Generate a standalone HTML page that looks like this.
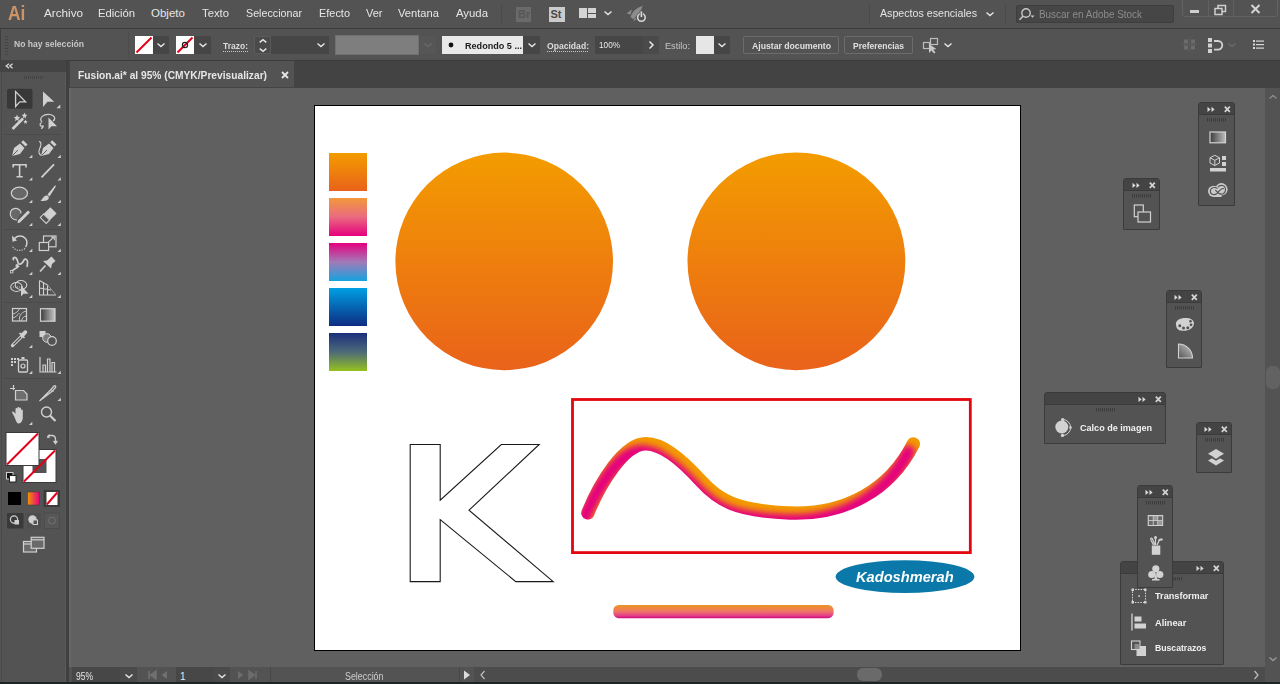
<!DOCTYPE html>
<html><head><meta charset="utf-8"><style>
html,body{margin:0;padding:0;}
body{width:1280px;height:684px;overflow:hidden;position:relative;background:#535353;font-family:"Liberation Sans",sans-serif;}
.a{position:absolute;box-sizing:border-box;}
.t{position:absolute;white-space:pre;line-height:normal;transform-origin:0 0;}
svg{position:absolute;overflow:visible;}

.pnl{position:absolute;box-sizing:border-box;background:#535353;border:1px solid #3d3d3d;border-radius:3px 3px 2px 2px;}
.ph{position:absolute;left:0;right:0;top:0;height:12px;background:#444444;border-radius:2px 2px 0 0;}

</style></head><body>
<div class="a" style="left:0px;top:0px;width:1280px;height:28px;background:#535353"></div>
<div class="a" style="left:0px;top:28px;width:1280px;height:1px;background:#3a3a3a"></div>
<span class="t" style="left:8px;top:1.9px;font-size:20px;font-weight:bold;color:#cf9466;transform:scaleX(0.87)">Ai</span>
<div class="a" style="left:501px;top:5px;width:1px;height:18px;background:#4a4a4a"></div>
<div class="a" style="left:869px;top:4px;width:1px;height:20px;background:#4b4b4b"></div>
<div class="a" style="left:1005px;top:4px;width:1px;height:20px;background:#4b4b4b"></div>
<div class="a" style="left:516px;top:7px;width:15px;height:15px;background:#6a6a6a"></div>
<span class="t" style="left:518px;top:7.5px;font-size:11px;font-weight:bold;color:#575757">Br</span>
<div class="a" style="left:549px;top:7px;width:16px;height:15px;background:#cbcbcb"></div>
<span class="t" style="left:550.5px;top:7.5px;font-size:11px;font-weight:bold;color:#4a4a4a">St</span>
<div class="a" style="left:579px;top:8px;width:8px;height:10px;background:#d4d4d4"></div>
<div class="a" style="left:588px;top:8px;width:8px;height:4.5px;background:#d4d4d4"></div>
<div class="a" style="left:588px;top:13.5px;width:8px;height:4.5px;background:#d4d4d4"></div>
<svg style="left:601.5px;top:7px;" width="12" height="12" viewBox="0 0 12 12"><path d="M2.5 4.45 L6 7.55 L9.5 4.45" fill="none" stroke="#e6e6e6" stroke-width="1.4"/></svg>
<svg style="left:620px;top:2px;" width="32" height="24" viewBox="0 0 32 24"><path d="M10.5 15 C12 10 16 6 22.7 3.8 C21 9.5 18 13.5 13 17 Z" fill="#8c8c8c"/><path d="M6.5 11.5 L12 7.5 L10.5 12.5 Z" fill="#8c8c8c"/><path d="M13.5 19.5 L14.5 15.5 L16.5 17 Z" fill="#8c8c8c"/><circle cx="21.4" cy="15.4" r="5.2" fill="#535353"/><circle cx="21.4" cy="15.4" r="3.8" fill="none" stroke="#d8d8d8" stroke-width="1.6"/><path d="M21.4 8.8 V15" stroke="#535353" stroke-width="3.4"/><path d="M21.4 9.3 V15" stroke="#d8d8d8" stroke-width="1.7"/></svg>
<svg style="left:983.5px;top:8px;" width="12" height="12" viewBox="0 0 12 12"><path d="M2.5 4.45 L6 7.55 L9.5 4.45" fill="none" stroke="#e6e6e6" stroke-width="1.4"/></svg>
<div class="a" style="left:1016px;top:5px;width:158px;height:18px;background:#464646;border:1px solid #3e3e3e;border-radius:2px"></div>
<svg style="left:1017px;top:6px;" width="20" height="16" viewBox="0 0 20 16"><circle cx="9" cy="7" r="4.2" fill="none" stroke="#c8c8c8" stroke-width="1.4"/><path d="M6.2 10 L2.5 13.8" stroke="#c8c8c8" stroke-width="1.6"/><path d="M13.5 9.5 L17.5 9.5 L15.5 11.8 Z" fill="#c8c8c8"/></svg>
<div class="a" style="left:1182px;top:-3px;width:96px;height:20px;border:1px solid #636363;border-radius:3px"></div>
<div class="a" style="left:1208px;top:0px;width:1px;height:16px;background:#606060"></div>
<div class="a" style="left:1233px;top:0px;width:1px;height:16px;background:#606060"></div>
<div class="a" style="left:1190px;top:10px;width:9px;height:3px;background:#cfcfcf"></div>
<svg style="left:1214px;top:4px;" width="14" height="12" viewBox="0 0 14 12"><rect x="1" y="4.5" width="7" height="6" fill="none" stroke="#cfcfcf" stroke-width="1.5"/><path d="M4 4.5 V1.5 H11.5 V7.5 H8" fill="none" stroke="#cfcfcf" stroke-width="1.5"/></svg>
<svg style="left:1249px;top:3px;" width="14" height="12" viewBox="0 0 14 12"><path d="M2.5 2 L10.5 10 M10.5 2 L2.5 10" stroke="#d4d4d4" stroke-width="2"/></svg>
<div class="a" style="left:0px;top:29px;width:1280px;height:31px;background:#535353"></div>
<div class="a" style="left:0px;top:60px;width:1280px;height:1px;background:#3c3c3c"></div>
<div class="a" style="left:0px;top:29px;width:1px;height:31px;background:#3e3e3e"></div>
<div class="a" style="left:128px;top:31px;width:1px;height:27px;background:#4c4c4c"></div>
<div class="a" style="left:5px;top:36px;width:3px;height:1px;background:#444444"></div>
<div class="a" style="left:5px;top:39px;width:3px;height:1px;background:#444444"></div>
<div class="a" style="left:5px;top:42px;width:3px;height:1px;background:#444444"></div>
<div class="a" style="left:5px;top:45px;width:3px;height:1px;background:#444444"></div>
<div class="a" style="left:5px;top:48px;width:3px;height:1px;background:#444444"></div>
<div class="a" style="left:5px;top:51px;width:3px;height:1px;background:#444444"></div>
<div class="a" style="left:5px;top:54px;width:3px;height:1px;background:#444444"></div>
<svg style="left:135px;top:36px;" width="18" height="18" viewBox="0 0 18 18"><rect x="0" y="0" width="18" height="18" fill="#fff"/><path d="M1.5 16.5 L16.5 1.5" stroke="#e2001a" stroke-width="2"/></svg>
<div class="a" style="left:153px;top:36px;width:16px;height:18px;background:#464646"></div>
<svg style="left:155px;top:39px;" width="12" height="12" viewBox="0 0 12 12"><path d="M2.5 4.45 L6 7.55 L9.5 4.45" fill="none" stroke="#e6e6e6" stroke-width="1.4"/></svg>
<svg style="left:176px;top:36px;" width="18" height="18" viewBox="0 0 18 18"><rect x="0" y="0" width="18" height="18" fill="#fff"/><path d="M1.5 16.5 L16.5 1.5" stroke="#e2001a" stroke-width="2"/><circle cx="9.0" cy="9.0" r="2.6" fill="none" stroke="#222" stroke-width="1.2"/></svg>
<div class="a" style="left:194px;top:36px;width:17px;height:18px;background:#464646"></div>
<svg style="left:196.5px;top:39px;" width="12" height="12" viewBox="0 0 12 12"><path d="M2.5 4.45 L6 7.55 L9.5 4.45" fill="none" stroke="#e6e6e6" stroke-width="1.4"/></svg>
<div class="a" style="left:223px;top:51px;width:1px;height:1px;background:#c8c8c8"></div>
<div class="a" style="left:225px;top:51px;width:1px;height:1px;background:#c8c8c8"></div>
<div class="a" style="left:227px;top:51px;width:1px;height:1px;background:#c8c8c8"></div>
<div class="a" style="left:229px;top:51px;width:1px;height:1px;background:#c8c8c8"></div>
<div class="a" style="left:231px;top:51px;width:1px;height:1px;background:#c8c8c8"></div>
<div class="a" style="left:233px;top:51px;width:1px;height:1px;background:#c8c8c8"></div>
<div class="a" style="left:235px;top:51px;width:1px;height:1px;background:#c8c8c8"></div>
<div class="a" style="left:237px;top:51px;width:1px;height:1px;background:#c8c8c8"></div>
<div class="a" style="left:239px;top:51px;width:1px;height:1px;background:#c8c8c8"></div>
<div class="a" style="left:241px;top:51px;width:1px;height:1px;background:#c8c8c8"></div>
<div class="a" style="left:243px;top:51px;width:1px;height:1px;background:#c8c8c8"></div>
<div class="a" style="left:245px;top:51px;width:1px;height:1px;background:#c8c8c8"></div>
<div class="a" style="left:247px;top:51px;width:1px;height:1px;background:#c8c8c8"></div>
<div class="a" style="left:254px;top:36px;width:17px;height:18px;background:#4a4a4a;border:1px solid #5a5a5a"></div>
<svg style="left:256.5px;top:35px;" width="12" height="12" viewBox="0 0 12 12"><path d="M2.7 7.3999999999999995 L6 4.6000000000000005 L9.3 7.3999999999999995" fill="none" stroke="#e6e6e6" stroke-width="1.4"/></svg>
<svg style="left:256.5px;top:43.5px;" width="12" height="12" viewBox="0 0 12 12"><path d="M2.7 4.6000000000000005 L6 7.3999999999999995 L9.3 4.6000000000000005" fill="none" stroke="#e6e6e6" stroke-width="1.4"/></svg>
<div class="a" style="left:271px;top:36px;width:41px;height:18px;background:#464646"></div>
<div class="a" style="left:312px;top:36px;width:17px;height:18px;background:#464646"></div>
<svg style="left:314.5px;top:39px;" width="12" height="12" viewBox="0 0 12 12"><path d="M2.5 4.45 L6 7.55 L9.5 4.45" fill="none" stroke="#e6e6e6" stroke-width="1.4"/></svg>
<div class="a" style="left:335px;top:35px;width:84px;height:19.5px;background:#7e7e7e;border:1px solid #707070"></div>
<div class="a" style="left:420px;top:36px;width:16px;height:18px;background:#565656"></div>
<svg style="left:422px;top:39px;" width="12" height="12" viewBox="0 0 12 12"><path d="M2.5 4.45 L6 7.55 L9.5 4.45" fill="none" stroke="#6a6a6a" stroke-width="1.4"/></svg>
<div class="a" style="left:442px;top:36px;width:81px;height:18px;background:#e9e9e9"></div>
<svg style="left:442px;top:36px;" width="20" height="18" viewBox="0 0 20 18"><circle cx="9" cy="9" r="2.4" fill="#111"/></svg>
<div class="a" style="left:523px;top:36px;width:17px;height:18px;background:#464646"></div>
<svg style="left:525.5px;top:39px;" width="12" height="12" viewBox="0 0 12 12"><path d="M2.5 4.45 L6 7.55 L9.5 4.45" fill="none" stroke="#e6e6e6" stroke-width="1.4"/></svg>
<div class="a" style="left:547px;top:51px;width:1px;height:1px;background:#c8c8c8"></div>
<div class="a" style="left:549px;top:51px;width:1px;height:1px;background:#c8c8c8"></div>
<div class="a" style="left:551px;top:51px;width:1px;height:1px;background:#c8c8c8"></div>
<div class="a" style="left:553px;top:51px;width:1px;height:1px;background:#c8c8c8"></div>
<div class="a" style="left:555px;top:51px;width:1px;height:1px;background:#c8c8c8"></div>
<div class="a" style="left:557px;top:51px;width:1px;height:1px;background:#c8c8c8"></div>
<div class="a" style="left:559px;top:51px;width:1px;height:1px;background:#c8c8c8"></div>
<div class="a" style="left:561px;top:51px;width:1px;height:1px;background:#c8c8c8"></div>
<div class="a" style="left:563px;top:51px;width:1px;height:1px;background:#c8c8c8"></div>
<div class="a" style="left:565px;top:51px;width:1px;height:1px;background:#c8c8c8"></div>
<div class="a" style="left:567px;top:51px;width:1px;height:1px;background:#c8c8c8"></div>
<div class="a" style="left:569px;top:51px;width:1px;height:1px;background:#c8c8c8"></div>
<div class="a" style="left:571px;top:51px;width:1px;height:1px;background:#c8c8c8"></div>
<div class="a" style="left:573px;top:51px;width:1px;height:1px;background:#c8c8c8"></div>
<div class="a" style="left:575px;top:51px;width:1px;height:1px;background:#c8c8c8"></div>
<div class="a" style="left:577px;top:51px;width:1px;height:1px;background:#c8c8c8"></div>
<div class="a" style="left:579px;top:51px;width:1px;height:1px;background:#c8c8c8"></div>
<div class="a" style="left:581px;top:51px;width:1px;height:1px;background:#c8c8c8"></div>
<div class="a" style="left:583px;top:51px;width:1px;height:1px;background:#c8c8c8"></div>
<div class="a" style="left:585px;top:51px;width:1px;height:1px;background:#c8c8c8"></div>
<div class="a" style="left:587px;top:51px;width:1px;height:1px;background:#c8c8c8"></div>
<div class="a" style="left:595px;top:36px;width:48px;height:18px;background:#464646"></div>
<div class="a" style="left:643px;top:36px;width:16px;height:18px;background:#4a4a4a"></div>
<svg style="left:645px;top:39px;" width="12" height="12" viewBox="0 0 12 12"><path d="M4.5 2.5 L8 6 L4.5 9.5" fill="none" stroke="#e6e6e6" stroke-width="1.5"/></svg>
<div class="a" style="left:696px;top:36px;width:18px;height:18px;background:#e6e6e6"></div>
<div class="a" style="left:714px;top:36px;width:16px;height:18px;background:#464646"></div>
<svg style="left:716px;top:39px;" width="12" height="12" viewBox="0 0 12 12"><path d="M2.5 4.45 L6 7.55 L9.5 4.45" fill="none" stroke="#e6e6e6" stroke-width="1.4"/></svg>
<div class="a" style="left:743px;top:36px;width:96px;height:18px;border:1px solid #6c6c6c;border-radius:2px"></div>
<div class="a" style="left:844px;top:36px;width:69px;height:18px;border:1px solid #6c6c6c;border-radius:2px"></div>
<svg style="left:921px;top:36px;" width="22" height="18" viewBox="0 0 22 18"><rect x="9.5" y="2.5" width="7" height="6" fill="none" stroke="#bdbdbd" stroke-width="1.2"/><rect x="2.5" y="6.5" width="6" height="6" fill="none" stroke="#bdbdbd" stroke-width="1.2"/><path d="M8 8 L8 17 L10.5 14.5 L13 17.5 L14.5 16.5 L12.3 13.5 L15.5 13 Z" fill="#c8c8c8"/></svg>
<svg style="left:942px;top:39px;" width="12" height="12" viewBox="0 0 12 12"><path d="M2.5 4.45 L6 7.55 L9.5 4.45" fill="none" stroke="#e6e6e6" stroke-width="1.4"/></svg>
<svg style="left:1181px;top:36px;" width="18" height="18" viewBox="0 0 18 18"><g fill="#6c6c6c"><rect x="3" y="3.5" width="4" height="4"/><rect x="10" y="3.5" width="4" height="4"/><rect x="3" y="9.5" width="4" height="4"/><rect x="10" y="9.5" width="4" height="4"/></g><path d="M8.5 1 V16 M1 8.5 H16" stroke="#5e5e5e" stroke-width="0.8"/></svg>
<svg style="left:1206px;top:36px;" width="18" height="18" viewBox="0 0 18 18"><g fill="#d2d2d2"><rect x="2" y="2" width="4" height="4"/><rect x="2" y="7.5" width="4" height="4"/><rect x="2" y="13" width="4" height="4"/></g><path d="M8 5 H12 A4.3 4.3 0 0 1 12 13.6 H8" fill="none" stroke="#d2d2d2" stroke-width="1.8"/></svg>
<svg style="left:1226px;top:39px;" width="12" height="12" viewBox="0 0 12 12"><path d="M2.5 4.45 L6 7.55 L9.5 4.45" fill="none" stroke="#6a6a6a" stroke-width="1.4"/></svg>
<svg style="left:1252px;top:38px;" width="14" height="14" viewBox="0 0 14 14"><g fill="#d8d8d8"><rect x="1" y="2" width="2" height="2"/><rect x="1" y="5.5" width="2" height="2"/><rect x="1" y="9" width="2" height="2"/><rect x="4" y="2.5" width="8" height="1.2"/><rect x="4" y="6" width="8" height="1.2"/><rect x="4" y="9.5" width="8" height="1.2"/></g></svg>
<div class="a" style="left:66px;top:61px;width:1214px;height:26px;background:#434343"></div>
<div class="a" style="left:70px;top:61px;width:224px;height:26px;background:#535353"></div>
<svg style="left:279px;top:68.5px;" width="12" height="12" viewBox="0 0 12 12"><path d="M3 3 L9 9 M9 3 L3 9" stroke="#e6e6e6" stroke-width="1.8"/></svg>
<div class="a" style="left:0px;top:61px;width:66px;height:623px;background:#535353"></div>
<div class="a" style="left:64.8px;top:72px;width:1.2000000000000028px;height:610px;background:#5a5a5a"></div>
<div class="a" style="left:0px;top:60px;width:66px;height:12px;background:#444444"></div>
<div class="a" style="left:1px;top:72px;width:65px;height:610px;border-left:1px solid #4a4a4a;border-right:1px solid #5a5a5a;background:#535353"></div>
<div class="a" style="left:66px;top:61px;width:3px;height:623px;background:#404040"></div>
<svg style="left:4px;top:61px;" width="12" height="10" viewBox="0 0 12 10"><path d="M5 2.8 L2.2 5 L5 7.2 M8.6 2.8 L5.8 5 L8.6 7.2" fill="none" stroke="#d6d6d6" stroke-width="1.3"/></svg>
<div class="a" style="left:24px;top:75.5px;width:1px;height:3.5px;background:#444444"></div>
<div class="a" style="left:26px;top:75.5px;width:1px;height:3.5px;background:#444444"></div>
<div class="a" style="left:28px;top:75.5px;width:1px;height:3.5px;background:#444444"></div>
<div class="a" style="left:30px;top:75.5px;width:1px;height:3.5px;background:#444444"></div>
<div class="a" style="left:32px;top:75.5px;width:1px;height:3.5px;background:#444444"></div>
<div class="a" style="left:34px;top:75.5px;width:1px;height:3.5px;background:#444444"></div>
<div class="a" style="left:36px;top:75.5px;width:1px;height:3.5px;background:#444444"></div>
<div class="a" style="left:38px;top:75.5px;width:1px;height:3.5px;background:#444444"></div>
<div class="a" style="left:40px;top:75.5px;width:1px;height:3.5px;background:#444444"></div>
<div class="a" style="left:42px;top:75.5px;width:1px;height:3.5px;background:#444444"></div>
<div class="a" style="left:70px;top:87px;width:1195px;height:580px;background:#606060"></div>
<div class="a" style="left:69px;top:87px;width:1211px;height:1px;background:#444444"></div>
<div class="a" style="left:69px;top:88px;width:1.5px;height:579px;background:#676767"></div>
<div class="a" style="left:1265px;top:88px;width:15px;height:579px;background:#535353"></div>
<svg style="left:1266.5px;top:90.5px;" width="12" height="12" viewBox="0 0 12 12"><path d="M2.5 7.55 L6 4.45 L9.5 7.55" fill="none" stroke="#8a8a8a" stroke-width="1.4"/></svg>
<svg style="left:1266.5px;top:653px;" width="12" height="12" viewBox="0 0 12 12"><path d="M2.5 4.45 L6 7.55 L9.5 4.45" fill="none" stroke="#9a9a9a" stroke-width="1.4"/></svg>
<div class="a" style="left:1266px;top:366px;width:14px;height:23px;background:#626262;border-radius:6px"></div>
<div class="a" style="left:70px;top:667px;width:1210px;height:15px;background:#535353"></div>
<div class="a" style="left:0px;top:682px;width:1280px;height:2px;background:#1e2426"></div>
<div class="a" style="left:72px;top:667px;width:48px;height:15px;background:#474747"></div>
<div class="a" style="left:120px;top:667px;width:17px;height:15px;background:#4a4a4a"></div>
<svg style="left:122.5px;top:669.5px;" width="12" height="12" viewBox="0 0 12 12"><path d="M2.5 4.45 L6 7.55 L9.5 4.45" fill="none" stroke="#e6e6e6" stroke-width="1.4"/></svg>
<svg style="left:140px;top:668px;" width="36" height="14" viewBox="0 0 36 14"><path d="M9 3 V11 M16 3 L10.5 7 L16 11 Z" stroke="#707070" fill="#707070" stroke-width="1.5"/><path d="M27 3 L21.5 7 L27 11 Z" fill="#707070"/></svg>
<div class="a" style="left:176px;top:667px;width:38px;height:15px;background:#474747"></div>
<div class="a" style="left:214px;top:667px;width:16px;height:15px;background:#4a4a4a"></div>
<svg style="left:216px;top:669.5px;" width="12" height="12" viewBox="0 0 12 12"><path d="M2.5 4.45 L6 7.55 L9.5 4.45" fill="none" stroke="#e6e6e6" stroke-width="1.4"/></svg>
<svg style="left:232px;top:668px;" width="36" height="14" viewBox="0 0 36 14"><path d="M6 3 L11.5 7 L6 11 Z" fill="#6c6c6c"/><path d="M17 3 L22.5 7 L17 11 Z M24 3 V11" stroke="#6c6c6c" fill="#6c6c6c" stroke-width="1.5"/></svg>
<div class="a" style="left:270px;top:667px;width:1px;height:15px;background:#474747"></div>
<div class="a" style="left:459px;top:667px;width:1px;height:15px;background:#474747"></div>
<svg style="left:461px;top:669px;" width="12" height="12" viewBox="0 0 12 12"><path d="M3 1.5 L9 6 L3 10.5 Z" fill="#dcdcdc"/></svg>
<div class="a" style="left:474px;top:667px;width:791px;height:15px;background:#4c4c4c"></div>
<svg style="left:477px;top:669px;" width="12" height="12" viewBox="0 0 12 12"><path d="M7.5 2 L4 6 L7.5 10" fill="none" stroke="#bdbdbd" stroke-width="1.2"/></svg>
<div class="a" style="left:857px;top:668px;width:25px;height:13px;background:#6a6a6a;border-radius:6px"></div>
<svg style="left:1250px;top:669px;" width="12" height="12" viewBox="0 0 12 12"><path d="M4.5 2 L8 6 L4.5 10" fill="none" stroke="#bdbdbd" stroke-width="1.2"/></svg>
<div class="a" style="left:314px;top:105px;width:707px;height:546px;background:#fff;border:1px solid #000"></div>

<svg style="left:0;top:0" width="70" height="684" viewBox="0 0 70 684">
<rect x="7" y="88.8" width="25.5" height="20" rx="2" fill="#383838"/>
<path d="M15.6 91.5 V106.5 L19.8 101.8 H25.6 Z" fill="none" stroke="#d0d0d0" stroke-width="1.3" stroke-linejoin="miter"/>
<path d="M43 91.5 V107 L47.5 101.8 H54.2 Z" fill="#d0d0d0"/>
<g fill="#d0d0d0">
<path d="M56.5 108.3 H60.3 V104.5 Z"/>
<path d="M29 158 H32.3 V154.7 Z"/><path d="M57.5 158 H60.8 V154.7 Z"/>
<path d="M29 180.5 H32.3 V177.2 Z"/><path d="M57.5 180.5 H60.8 V177.2 Z"/>
<path d="M29 203 H32.3 V199.7 Z"/><path d="M57.5 203 H60.8 V199.7 Z"/>
<path d="M29 226 H32.3 V222.7 Z"/><path d="M57.5 226 H60.8 V222.7 Z"/>
<path d="M29 252 H32.3 V248.7 Z"/><path d="M57.5 252 H60.8 V248.7 Z"/>
<path d="M29 275 H32.3 V271.7 Z"/><path d="M57.5 275 H60.8 V271.7 Z"/>
<path d="M29 298 H32.3 V294.7 Z"/><path d="M57.5 298 H60.8 V294.7 Z"/>
<path d="M29 348 H32.3 V344.7 Z"/>
<path d="M29 374 H32.3 V370.7 Z"/><path d="M57.5 374 H60.8 V370.7 Z"/>
<path d="M57.5 401 H60.8 V397.7 Z"/>
<path d="M29 425 H32.3 V421.7 Z"/>
</g>
<!-- magic wand -->
<path d="M12.5 129 L23 118.5" stroke="#d0d0d0" stroke-width="2.6" stroke-linecap="butt"/>
<path d="M17 114.5 L17.9 116.8 L20.3 117.2 L18.4 118.7 L18.9 121.2 L17 119.8 L15.1 121.2 L15.6 118.7 L13.7 117.2 L16.1 116.8 Z" fill="#d0d0d0"/>
<path d="M24.5 112.5 L25.3 114.6 L27.4 115 L25.7 116.3 L26.2 118.4 L24.5 117.2 L22.8 118.4 L23.3 116.3 L21.6 115 L23.7 114.6 Z" fill="#d0d0d0"/>
<path d="M25.5 119.5 L26.1 121 L27.6 121.3 L26.5 122.3 L26.8 123.8 L25.5 123 L24.2 123.8 L24.5 122.3 L23.4 121.3 L24.9 121 Z" fill="#d0d0d0"/>
<!-- lasso -->
<path d="M42 122 C38 118 44 113.5 50 114.5 C55 115.5 56 119 53 121" fill="none" stroke="#d0d0d0" stroke-width="1.2"/>
<path d="M41.5 122.5 C39 124 40 127 42.5 126 C44 125.5 43 128 41 128.5" fill="none" stroke="#d0d0d0" stroke-width="1.2"/>
<path d="M48.5 117.5 V129.5 L51.5 126.2 H57 Z" fill="#d0d0d0"/>
<!-- pen -->
<path d="M12 156 L14 148 L20 143.5 L24.5 148 L20 154 Z" fill="#d0d0d0"/>
<path d="M21.2 142.2 L23.2 140.2 L27.5 144.5 L25.5 146.5 Z" fill="#d0d0d0"/>
<path d="M12.3 155.7 L18 150" stroke="#535353" stroke-width="0.9"/>
<!-- curvature pen -->
<path d="M41 156 L43 148 L49 143.5 L53.5 148 L49 154 Z" fill="#d0d0d0"/>
<path d="M50.2 142.2 L52.2 140.2 L56.5 144.5 L54.5 146.5 Z" fill="#d0d0d0"/>
<path d="M41.3 155.7 L47 150" stroke="#535353" stroke-width="0.9"/>
<path d="M39 141.5 C42 142 41 146 39.5 149 C38 152 39.5 155 41.5 155.5" fill="none" stroke="#d0d0d0" stroke-width="1.1"/>
<!-- type -->
<path d="M13.2 167.6 V164.8 H26 V167.6 M19.6 165 V176.6 M16.5 176.8 H22.7" fill="none" stroke="#d0d0d0" stroke-width="1.6"/>
<!-- line -->
<path d="M41.5 177.3 L54 164.4" stroke="#d0d0d0" stroke-width="1.8"/>
<!-- ellipse -->
<ellipse cx="19.4" cy="193.2" rx="8.1" ry="6" fill="#686868" stroke="#d0d0d0" stroke-width="1.2"/>
<!-- brush -->
<path d="M47.5 194.5 L54.5 186 C55.5 185 56.3 185.8 55.5 187 L49.5 196.5 Z" fill="#d0d0d0"/>
<path d="M46 195.5 C48 195 49.5 197 48.5 199 C47 201 44 201 40.5 201 C42.5 199 43 196.5 46 195.5 Z" fill="#d0d0d0"/>
<!-- shaper -->
<path d="M17 220 C12 220 9.5 216 10.5 212 C11.5 208.5 16 207.5 19 209.5 C20.5 210.5 21.2 212 21 213.5" fill="#686868" stroke="#d0d0d0" stroke-width="1.2"/>
<path d="M18 220.5 L28 210.5 L30 212.5 L20 222.5 L17.5 223.3 Z" fill="#d0d0d0"/>
<!-- eraser -->
<path d="M43.7 213.7 L50.4 207.2 L56.6 213.4 L50 220 Z" fill="#d0d0d0"/>
<path d="M43.6 214 L40.3 217.6 L46.2 223.5 L49.7 220 Z" fill="none" stroke="#d0d0d0" stroke-width="1.1"/>
<!-- rotate -->
<path d="M14.5 238.5 C17 235.5 22 235 25 238 C27.5 240.5 27.5 244.5 25.5 247" fill="none" stroke="#d0d0d0" stroke-width="1.5"/>
<path d="M12 235.5 L17 240.5 L12.5 241.8 Z" fill="#d0d0d0"/>
<path d="M25 248.5 C22 251 17 251 14 248.5 C13 247.5 12.5 246.5 12.3 245.5" fill="none" stroke="#d0d0d0" stroke-width="1.2" stroke-dasharray="1.2 1.3"/>
<!-- scale -->
<rect x="43.5" y="236" width="12.5" height="10.8" fill="none" stroke="#d0d0d0" stroke-width="1.2"/>
<rect x="39.3" y="242.5" width="9.3" height="8" fill="#535353" stroke="#d0d0d0" stroke-width="1.2"/>
<path d="M48.5 242 L54 236.8 M51 237 H54.3 V240.3" fill="none" stroke="#d0d0d0" stroke-width="1.1"/>
<!-- warp -->
<path d="M14 260 C12 258.5 14 256.5 16 258 C18.5 260 17 263 19 264 C21 265 23 262 24 260 C25 258.5 27 259 27.5 261.5 C28 263.5 26.5 265 27.5 267 M19 266 C17 268 14 269 12 271" fill="none" stroke="#d0d0d0" stroke-width="1.7"/>
<circle cx="17" cy="265.5" r="1.5" fill="#d0d0d0"/><rect x="10.5" y="270.5" width="2.4" height="2.4" fill="none" stroke="#d0d0d0" stroke-width="0.8"/>
<!-- pin -->
<path d="M47 260.5 L51.5 256.5 L55.5 261 L52 264 L51 268.5 L43 261 Z" fill="#d0d0d0"/>
<path d="M45.5 265.5 L40 271.5" stroke="#d0d0d0" stroke-width="1.7"/>
<!-- shape builder -->
<ellipse cx="16.5" cy="287" rx="5.8" ry="4.5" fill="none" stroke="#d0d0d0" stroke-width="1.1"/>
<ellipse cx="21" cy="285" rx="5.8" ry="4.5" fill="none" stroke="#d0d0d0" stroke-width="1.1"/>
<path d="M13 287 H21" stroke="#d0d0d0" stroke-width="0.9" stroke-dasharray="1 1"/>
<path d="M21 285.5 V296.5 L23.5 293.8 H28.5 Z" fill="#d0d0d0"/>
<!-- perspective grid -->
<path d="M39.5 280.5 V295 H56 M39.5 280.5 L47.5 285 V295 M39.5 288 L51 290 M43.5 282.8 V295" fill="none" stroke="#d0d0d0" stroke-width="1.1"/>
<path d="M47.5 285 L56 295" stroke="#9a9a9a" stroke-width="1"/>
<!-- mesh -->
<rect x="12.5" y="308.5" width="14" height="12.5" fill="none" stroke="#d0d0d0" stroke-width="1.2"/>
<path d="M13 314 C17 313 19 310 19.5 308.5 M19.5 321 C19 317 20 313 26 311 M13 318 C16 317 18 314.5 19.5 313 M21.5 321 C22 318 24 316 26.5 316" fill="none" stroke="#d0d0d0" stroke-width="0.9"/>
<!-- gradient -->
<defs><linearGradient id="tg" x1="0" x2="1" y1="0" y2="0"><stop offset="0" stop-color="#3a3a3a"/><stop offset="1" stop-color="#c8c8c8"/></linearGradient></defs>
<rect x="40.5" y="308.7" width="14.5" height="12.5" fill="url(#tg)" stroke="#d0d0d0" stroke-width="1.2"/>
<!-- eyedropper -->
<path d="M12.5 345.5 L22 336" stroke="#d0d0d0" stroke-width="3.2" stroke-linecap="round"/>
<path d="M13.5 344.5 L21 337" stroke="#535353" stroke-width="1.3"/>
<path d="M20.5 334 L24.5 330.5 C26 329.5 28 331.5 27 333 L23.5 337 Z" fill="#d0d0d0"/>
<path d="M19.5 333 L24.5 338" stroke="#d0d0d0" stroke-width="1.7"/>
<!-- blend -->
<rect x="39.5" y="331" width="6" height="6" fill="#d0d0d0"/>
<circle cx="47" cy="338" r="4.3" fill="#7a7a7a" stroke="#d0d0d0" stroke-width="1"/>
<circle cx="52" cy="341" r="4.3" fill="#535353" stroke="#d0d0d0" stroke-width="1.2"/>
<!-- symbol sprayer -->
<g fill="#d0d0d0"><rect x="11" y="358" width="2" height="2"/><rect x="14" y="358" width="2" height="2"/><rect x="17" y="358" width="2" height="2"/><rect x="11" y="361" width="2" height="2"/><rect x="14" y="361" width="2" height="2"/><rect x="11" y="364" width="2" height="2"/><rect x="21.5" y="357" width="3" height="2"/></g>
<rect x="18.5" y="360" width="9" height="12" rx="1" fill="none" stroke="#d0d0d0" stroke-width="1.3"/>
<circle cx="23" cy="366" r="2" fill="none" stroke="#d0d0d0" stroke-width="1.2"/>
<!-- graph -->
<path d="M40 357 V372 H56.5" fill="none" stroke="#d0d0d0" stroke-width="1.2"/>
<path d="M43 372 V365 H45.5 V372 M47.5 372 V359 H50 V372 M52 372 V362.5 H54.5 V372" fill="none" stroke="#d0d0d0" stroke-width="1.2"/>
<!-- artboard -->
<path d="M13.5 385 V390 M10 388.5 H15" stroke="#d0d0d0" stroke-width="1.2"/>
<path d="M15.5 390.5 H23.5 L27 394 V400 H15.5 Z" fill="#6e6e6e" stroke="#d0d0d0" stroke-width="1.2"/>
<!-- slice/knife -->
<path d="M39.5 401 L51 389.5 L54 386 C55 385 56.5 386.5 55.5 387.5 L52.5 391 Z" fill="none" stroke="#d0d0d0" stroke-width="1.2"/>
<path d="M51 389.5 L53.5 392" stroke="#d0d0d0" stroke-width="1"/>
<!-- hand -->
<path d="M14 416 C13 414 11.5 412 12.5 411.5 C13.5 411 15 413 15.5 414 V409 C15.5 407.5 17.3 407.5 17.3 409 V413 V408 C17.3 406.5 19.2 406.5 19.2 408 V413 V408.5 C19.2 407 21 407 21 408.5 V413.5 V410.5 C21 409 22.8 409 22.8 410.5 V417 C22.8 421 21 423.5 18.5 423.5 C16.5 423.5 15.5 419 14 416 Z" fill="#d0d0d0"/>
<!-- zoom -->
<circle cx="46.5" cy="412" r="5" fill="none" stroke="#d0d0d0" stroke-width="1.4"/>
<path d="M50 415.5 L55.5 421" stroke="#d0d0d0" stroke-width="2.2"/>
<!-- fill/stroke -->
<rect x="23" y="449.5" width="33" height="33" fill="#fff" stroke="#3a3a3a" stroke-width="1"/>
<rect x="32.5" y="459" width="14" height="14" fill="#535353"/>
<path d="M24 481.5 L55 450.5" stroke="#e2001a" stroke-width="2"/>
<rect x="6" y="432.5" width="33" height="33" fill="#fff" stroke="#3a3a3a" stroke-width="1"/>
<path d="M7 464.5 L38 433.5" stroke="#e2001a" stroke-width="2"/>
<path d="M49 435.5 L47.5 437.8 M49 435.5 H52 C54.5 435.5 55.5 437 55.5 439.5 V442 M53.5 440.8 L55.5 443.5 L57.3 440.8" fill="none" stroke="#d0d0d0" stroke-width="1.3"/>
<path d="M49.5 434 L47 436.3 L49.5 438.5 Z" fill="#d0d0d0"/>
<rect x="6.5" y="472.5" width="6.5" height="6.5" fill="#111" stroke="#d0d0d0" stroke-width="1"/>
<rect x="9.5" y="475.5" width="6.5" height="6.5" fill="#fff" stroke="#222" stroke-width="1"/>
<!-- color/gradient/none -->
<rect x="8" y="492" width="13" height="13" fill="#000"/>
<defs><linearGradient id="g2" x1="0" x2="1" y1="0" y2="0"><stop offset="0" stop-color="#f29600"/><stop offset="1" stop-color="#e5007e"/></linearGradient></defs>
<rect x="27.5" y="492" width="12" height="13" fill="url(#g2)" stroke="#3a3a3a" stroke-width="0.5"/>
<rect x="43.5" y="490" width="16.5" height="17" rx="1" fill="#3b3b3b"/>
<rect x="46.5" y="492" width="11" height="13" fill="#fff"/>
<path d="M46.8 504.5 L57.3 492.5" stroke="#e2001a" stroke-width="2"/>
<!-- draw modes -->
<rect x="7" y="513" width="16.5" height="15.5" rx="1" fill="#3a3a3a"/>
<rect x="27" y="513" width="14" height="15.5" fill="#4e4e4e"/>
<rect x="44.5" y="513" width="15" height="15.5" fill="#575757" stroke="#4c4c4c" stroke-width="1"/>
<circle cx="14" cy="519.5" r="3.6" fill="none" stroke="#d0d0d0" stroke-width="1.2"/>
<rect x="14.5" y="520" width="4.5" height="4.5" fill="#d0d0d0"/>
<circle cx="32.5" cy="519.5" r="3.6" fill="#d0d0d0" stroke="#d0d0d0" stroke-width="1.2"/>
<rect x="33" y="520" width="4.5" height="4.5" fill="#535353" stroke="#d0d0d0" stroke-width="1"/>
<circle cx="52" cy="520.5" r="3.3" fill="none" stroke="#6e6e6e" stroke-width="1.1"/>
<!-- screen mode -->
<rect x="23.5" y="541.5" width="13" height="10.5" fill="#6a6a6a" stroke="#d0d0d0" stroke-width="1.2"/>
<path d="M23.5 544 H36.5" stroke="#d0d0d0" stroke-width="1.2"/>
<rect x="31.2" y="537.3" width="12.8" height="11" fill="#6a6a6a" stroke="#d0d0d0" stroke-width="1.2"/>
<path d="M31.2 539.8 H44" stroke="#d0d0d0" stroke-width="1.2"/>
<path d="M4 134.5 H62 M4 229.5 H62 M4 302.5 H62 M4 378.5 H62" stroke="#4b4b4b" stroke-width="1"/>
</svg>

<svg style="left:0;top:0" width="1280" height="684" viewBox="0 0 1280 684">
<defs>
<linearGradient id="o1" x1="0" y1="0" x2="0" y2="1"><stop offset="0" stop-color="#f39c00"/><stop offset="1" stop-color="#e9621a"/></linearGradient>
<linearGradient id="s2" x1="0" y1="0" x2="0" y2="1"><stop offset="0" stop-color="#f29a3a"/><stop offset="0.5" stop-color="#ea6a80"/><stop offset="1" stop-color="#e5007e"/></linearGradient>
<linearGradient id="s3" x1="0" y1="0" x2="0" y2="1"><stop offset="0" stop-color="#e4007f"/><stop offset="0.5" stop-color="#a27ab8"/><stop offset="1" stop-color="#14a3e0"/></linearGradient>
<linearGradient id="s4" x1="0" y1="0" x2="0" y2="1"><stop offset="0" stop-color="#009fe3"/><stop offset="1" stop-color="#0d2c82"/></linearGradient>
<linearGradient id="s5" x1="0" y1="0" x2="0" y2="1"><stop offset="0" stop-color="#1a2e7c"/><stop offset="0.5" stop-color="#4e6a78"/><stop offset="1" stop-color="#95c11f"/></linearGradient>
<linearGradient id="bar" x1="0" y1="0" x2="0" y2="1"><stop offset="0" stop-color="#e8922a"/><stop offset="0.2" stop-color="#f08838"/><stop offset="0.5" stop-color="#ee7468"/><stop offset="0.8" stop-color="#e44088"/><stop offset="1" stop-color="#d0087a"/></linearGradient>
<mask id="cm" maskUnits="userSpaceOnUse" x="0" y="0" width="1280" height="684"><path d="M587.9 512.9 C600 483 624 443.8 645.8 443.8 C662 443.8 680 458 700 480 C718 500 735 511 790 513 C845 515 890 490 913.3 443.9" fill="none" stroke="#fff" stroke-width="13.4" stroke-linecap="round"/></mask>
<filter id="bl" x="-20%" y="-20%" width="140%" height="140%"><feGaussianBlur stdDeviation="3.2"/></filter>
</defs>
<rect x="329" y="153" width="38" height="38" fill="url(#o1)"/>
<rect x="329" y="198" width="38" height="38" fill="url(#s2)"/>
<rect x="329" y="243" width="38" height="38" fill="url(#s3)"/>
<rect x="329" y="288" width="38" height="38" fill="url(#s4)"/>
<rect x="329" y="333" width="38" height="38" fill="url(#s5)"/>
<circle cx="504.2" cy="261.4" r="108.8" fill="url(#o1)"/>
<circle cx="796.4" cy="261.3" r="108.9" fill="url(#o1)"/>
<path d="M410.2 444.5 H440.2 V500.2 L501.3 444.5 H539.2 L469 510.2 L553.2 581.6 H515.8 L440.2 519.6 V581.6 H410.2 Z" fill="none" stroke="#1a1a1a" stroke-width="1.1"/>
<rect x="572.5" y="399.5" width="397.8" height="153.1" fill="none" stroke="#e3060f" stroke-width="2.8"/>
<g mask="url(#cm)">
<path d="M587.9 512.9 C600 483 624 443.8 645.8 443.8 C662 443.8 680 458 700 480 C718 500 735 511 790 513 C845 515 890 490 913.3 443.9" fill="none" stroke="#f39a00" stroke-width="16" stroke-linecap="round"/>
<path d="M587.9 512.9 C600 483 624 443.8 645.8 443.8 C662 443.8 680 458 700 480 C718 500 735 511 790 513 C845 515 890 490 913.3 443.9" transform="translate(-5,8)" fill="none" stroke="#e4007f" stroke-width="14" stroke-linecap="round" filter="url(#bl)"/>
</g>
<ellipse cx="905" cy="576.7" rx="69.4" ry="16.4" fill="#0a78a8"/>
<rect x="613.3" y="605" width="220.3" height="13.2" rx="5.5" fill="url(#bar)"/>
</svg>
<div class="a" style="left:1198px;top:102px;width:37px;height:104px;background:#535353;border:1px solid #3b3b3b;border-radius:3px 3px 1px 1px;overflow:hidden"><div class="a" style="left:0;top:0;width:100%;height:11.5px;background:#444444;border-bottom:1px solid #3b3b3b"></div></div><svg style="left:1206px;top:105px" width="26" height="9" viewBox="0 0 26 9"><path d="M1.5 1.8 L4.6 4.4 L1.5 7 Z M5.5 1.8 L8.6 4.4 L5.5 7 Z" fill="#dadada"/><path d="M18.8 1.6 L23.8 6.8 M23.8 1.6 L18.8 6.8" stroke="#d4d4d4" stroke-width="1.7"/></svg><svg style="left:1207.0px;top:118.0px" width="20" height="4" viewBox="0 0 20 4"><rect x="0" y="0" width="1" height="3.5" fill="#3c3c3c"/><rect x="2" y="0" width="1" height="3.5" fill="#3c3c3c"/><rect x="4" y="0" width="1" height="3.5" fill="#3c3c3c"/><rect x="6" y="0" width="1" height="3.5" fill="#3c3c3c"/><rect x="8" y="0" width="1" height="3.5" fill="#3c3c3c"/><rect x="10" y="0" width="1" height="3.5" fill="#3c3c3c"/><rect x="12" y="0" width="1" height="3.5" fill="#3c3c3c"/><rect x="14" y="0" width="1" height="3.5" fill="#3c3c3c"/><rect x="16" y="0" width="1" height="3.5" fill="#3c3c3c"/><rect x="18" y="0" width="1" height="3.5" fill="#3c3c3c"/></svg>
<svg style="left:1195px;top:125px" width="40" height="80" viewBox="1195 125 40 80">
<defs><linearGradient id="pg" x1="0" x2="1" y1="0" y2="0"><stop offset="0" stop-color="#3c3c3c"/><stop offset="1" stop-color="#bdbdbd"/></linearGradient>
<linearGradient id="qg" x1="0" x2="1" y1="1" y2="0"><stop offset="0" stop-color="#555"/><stop offset="1" stop-color="#c8c8c8"/></linearGradient></defs>
<rect x="1210" y="132" width="15.5" height="10.8" fill="url(#pg)" stroke="#d2d2d2" stroke-width="1.2"/>
<path d="M1214.8 155.3 L1219.5 157.8 V163 L1214.8 165.5 L1210 163 V157.8 Z M1210 157.8 L1214.8 160.3 L1219.5 157.8 M1214.8 160.3 V165.5" fill="none" stroke="#d2d2d2" stroke-width="1"/>
<rect x="1222" y="156" width="4" height="4" fill="#d2d2d2"/><rect x="1222" y="162" width="4" height="4" fill="#d2d2d2"/>
<rect x="1210" y="168" width="16" height="3.5" fill="#d2d2d2"/>
<g fill="#cacaca"><circle cx="1213.6" cy="191.3" r="5.6"/><circle cx="1221.4" cy="189.3" r="6.2"/><rect x="1213.6" y="189" width="8" height="8"/></g>
<path d="M1217.5 188.6 C1215.5 186.8 1210.3 187 1210.3 191.3 C1210.3 195 1215 195.5 1217 193.3 L1219.8 190.3 C1221.2 188.8 1222.8 188 1224 188.8" fill="none" stroke="#535353" stroke-width="1.1"/>
<path d="M1215.2 189.8 L1218.5 193 C1220.5 194.8 1225.5 194.8 1225.5 189.6 C1225.5 185 1220 184 1217.8 187.3" fill="none" stroke="#535353" stroke-width="1.1"/>
</svg>
<div class="a" style="left:1123px;top:178px;width:37px;height:52px;background:#535353;border:1px solid #3b3b3b;border-radius:3px 3px 1px 1px;overflow:hidden"><div class="a" style="left:0;top:0;width:100%;height:11.5px;background:#444444;border-bottom:1px solid #3b3b3b"></div></div><svg style="left:1131px;top:181px" width="26" height="9" viewBox="0 0 26 9"><path d="M1.5 1.8 L4.6 4.4 L1.5 7 Z M5.5 1.8 L8.6 4.4 L5.5 7 Z" fill="#dadada"/><path d="M18.8 1.6 L23.8 6.8 M23.8 1.6 L18.8 6.8" stroke="#d4d4d4" stroke-width="1.7"/></svg><svg style="left:1132.0px;top:194.0px" width="20" height="4" viewBox="0 0 20 4"><rect x="0" y="0" width="1" height="3.5" fill="#3c3c3c"/><rect x="2" y="0" width="1" height="3.5" fill="#3c3c3c"/><rect x="4" y="0" width="1" height="3.5" fill="#3c3c3c"/><rect x="6" y="0" width="1" height="3.5" fill="#3c3c3c"/><rect x="8" y="0" width="1" height="3.5" fill="#3c3c3c"/><rect x="10" y="0" width="1" height="3.5" fill="#3c3c3c"/><rect x="12" y="0" width="1" height="3.5" fill="#3c3c3c"/><rect x="14" y="0" width="1" height="3.5" fill="#3c3c3c"/><rect x="16" y="0" width="1" height="3.5" fill="#3c3c3c"/><rect x="18" y="0" width="1" height="3.5" fill="#3c3c3c"/></svg>
<svg style="left:1130px;top:200px" width="26" height="26" viewBox="1130 200 26 26">
<rect x="1134.3" y="205" width="9" height="11.7" fill="none" stroke="#d2d2d2" stroke-width="1.2"/>
<rect x="1138" y="212" width="12.5" height="10" fill="#535353" stroke="#d2d2d2" stroke-width="1.2"/>
</svg>
<div class="a" style="left:1166px;top:290px;width:36px;height:78px;background:#535353;border:1px solid #3b3b3b;border-radius:3px 3px 1px 1px;overflow:hidden"><div class="a" style="left:0;top:0;width:100%;height:11.5px;background:#444444;border-bottom:1px solid #3b3b3b"></div></div><svg style="left:1173px;top:293px" width="26" height="9" viewBox="0 0 26 9"><path d="M1.5 1.8 L4.6 4.4 L1.5 7 Z M5.5 1.8 L8.6 4.4 L5.5 7 Z" fill="#dadada"/><path d="M18.8 1.6 L23.8 6.8 M23.8 1.6 L18.8 6.8" stroke="#d4d4d4" stroke-width="1.7"/></svg><svg style="left:1174.5px;top:306.0px" width="20" height="4" viewBox="0 0 20 4"><rect x="0" y="0" width="1" height="3.5" fill="#3c3c3c"/><rect x="2" y="0" width="1" height="3.5" fill="#3c3c3c"/><rect x="4" y="0" width="1" height="3.5" fill="#3c3c3c"/><rect x="6" y="0" width="1" height="3.5" fill="#3c3c3c"/><rect x="8" y="0" width="1" height="3.5" fill="#3c3c3c"/><rect x="10" y="0" width="1" height="3.5" fill="#3c3c3c"/><rect x="12" y="0" width="1" height="3.5" fill="#3c3c3c"/><rect x="14" y="0" width="1" height="3.5" fill="#3c3c3c"/><rect x="16" y="0" width="1" height="3.5" fill="#3c3c3c"/><rect x="18" y="0" width="1" height="3.5" fill="#3c3c3c"/></svg>
<svg style="left:1170px;top:312px" width="30" height="50" viewBox="1170 312 30 50">
<path d="M1176 325 C1175 320 1181 317.5 1187 318 C1193 318.5 1195 322 1193.5 325.5 C1192 329 1188 331 1182 330.8 C1177.5 330.5 1176.5 328 1176 325 Z" fill="#d2d2d2"/>
<circle cx="1179.8" cy="325.8" r="1.5" fill="#535353"/><circle cx="1183.5" cy="328" r="1.5" fill="#535353"/><circle cx="1187.8" cy="327.7" r="1.5" fill="#535353"/><circle cx="1191" cy="324.8" r="1.4" fill="#535353"/><circle cx="1190.5" cy="321.2" r="1.3" fill="#535353"/>
<path d="M1178.5 358 V344 A14 14 0 0 1 1192.5 358 Z" fill="url(#qg)" stroke="#d2d2d2" stroke-width="1.1"/>
</svg>
<div class="a" style="left:1044px;top:392px;width:122px;height:52px;background:#535353;border:1px solid #3b3b3b;border-radius:3px 3px 1px 1px;overflow:hidden"><div class="a" style="left:0;top:0;width:100%;height:11.5px;background:#444444;border-bottom:1px solid #3b3b3b"></div></div><svg style="left:1137px;top:395px" width="26" height="9" viewBox="0 0 26 9"><path d="M1.5 1.8 L4.6 4.4 L1.5 7 Z M5.5 1.8 L8.6 4.4 L5.5 7 Z" fill="#dadada"/><path d="M18.8 1.6 L23.8 6.8 M23.8 1.6 L18.8 6.8" stroke="#d4d4d4" stroke-width="1.7"/></svg><svg style="left:1095.5px;top:408.0px" width="20" height="4" viewBox="0 0 20 4"><rect x="0" y="0" width="1" height="3.5" fill="#3c3c3c"/><rect x="2" y="0" width="1" height="3.5" fill="#3c3c3c"/><rect x="4" y="0" width="1" height="3.5" fill="#3c3c3c"/><rect x="6" y="0" width="1" height="3.5" fill="#3c3c3c"/><rect x="8" y="0" width="1" height="3.5" fill="#3c3c3c"/><rect x="10" y="0" width="1" height="3.5" fill="#3c3c3c"/><rect x="12" y="0" width="1" height="3.5" fill="#3c3c3c"/><rect x="14" y="0" width="1" height="3.5" fill="#3c3c3c"/><rect x="16" y="0" width="1" height="3.5" fill="#3c3c3c"/><rect x="18" y="0" width="1" height="3.5" fill="#3c3c3c"/></svg>
<svg style="left:1052px;top:416px" width="24" height="24" viewBox="1052 416 24 24">
<circle cx="1061.8" cy="427" r="6.5" fill="#d2d2d2"/>
<path d="M1062.6 419.5 A8 8 0 0 1 1062.6 435.5" fill="none" stroke="#d2d2d2" stroke-width="1"/>
<circle cx="1062.7" cy="419.6" r="1.7" fill="#d2d2d2"/><circle cx="1062.5" cy="435.4" r="1.7" fill="#d2d2d2"/><circle cx="1070.5" cy="427.6" r="1.3" fill="#d2d2d2"/>
</svg>
<div class="a" style="left:1196px;top:422px;width:36px;height:51px;background:#535353;border:1px solid #3b3b3b;border-radius:3px 3px 1px 1px;overflow:hidden"><div class="a" style="left:0;top:0;width:100%;height:11.5px;background:#444444;border-bottom:1px solid #3b3b3b"></div></div><svg style="left:1203px;top:425px" width="26" height="9" viewBox="0 0 26 9"><path d="M1.5 1.8 L4.6 4.4 L1.5 7 Z M5.5 1.8 L8.6 4.4 L5.5 7 Z" fill="#dadada"/><path d="M18.8 1.6 L23.8 6.8 M23.8 1.6 L18.8 6.8" stroke="#d4d4d4" stroke-width="1.7"/></svg><svg style="left:1204.5px;top:438.0px" width="20" height="4" viewBox="0 0 20 4"><rect x="0" y="0" width="1" height="3.5" fill="#3c3c3c"/><rect x="2" y="0" width="1" height="3.5" fill="#3c3c3c"/><rect x="4" y="0" width="1" height="3.5" fill="#3c3c3c"/><rect x="6" y="0" width="1" height="3.5" fill="#3c3c3c"/><rect x="8" y="0" width="1" height="3.5" fill="#3c3c3c"/><rect x="10" y="0" width="1" height="3.5" fill="#3c3c3c"/><rect x="12" y="0" width="1" height="3.5" fill="#3c3c3c"/><rect x="14" y="0" width="1" height="3.5" fill="#3c3c3c"/><rect x="16" y="0" width="1" height="3.5" fill="#3c3c3c"/><rect x="18" y="0" width="1" height="3.5" fill="#3c3c3c"/></svg>
<svg style="left:1205px;top:446px" width="24" height="24" viewBox="1205 446 24 24">
<path d="M1216 456 L1224 460.5 L1216 465.5 L1208 460.5 Z" fill="#d2d2d2"/>
<path d="M1208 455 L1216 459.8 L1224 455" fill="none" stroke="#535353" stroke-width="1.6"/>
<path d="M1216 449 L1224 453.8 L1216 458.5 L1208 453.8 Z" fill="#d2d2d2"/>
</svg>
<div class="a" style="left:1120px;top:561px;width:104px;height:104px;background:#535353;border:1px solid #3b3b3b;border-radius:3px 3px 1px 1px;overflow:hidden"><div class="a" style="left:0;top:0;width:100%;height:11.5px;background:#444444;border-bottom:1px solid #3b3b3b"></div></div><svg style="left:1195px;top:564px" width="26" height="9" viewBox="0 0 26 9"><path d="M1.5 1.8 L4.6 4.4 L1.5 7 Z M5.5 1.8 L8.6 4.4 L5.5 7 Z" fill="#dadada"/><path d="M18.8 1.6 L23.8 6.8 M23.8 1.6 L18.8 6.8" stroke="#d4d4d4" stroke-width="1.7"/></svg><svg style="left:1162.5px;top:577.0px" width="20" height="4" viewBox="0 0 20 4"><rect x="0" y="0" width="1" height="3.5" fill="#3c3c3c"/><rect x="2" y="0" width="1" height="3.5" fill="#3c3c3c"/><rect x="4" y="0" width="1" height="3.5" fill="#3c3c3c"/><rect x="6" y="0" width="1" height="3.5" fill="#3c3c3c"/><rect x="8" y="0" width="1" height="3.5" fill="#3c3c3c"/><rect x="10" y="0" width="1" height="3.5" fill="#3c3c3c"/><rect x="12" y="0" width="1" height="3.5" fill="#3c3c3c"/><rect x="14" y="0" width="1" height="3.5" fill="#3c3c3c"/><rect x="16" y="0" width="1" height="3.5" fill="#3c3c3c"/><rect x="18" y="0" width="1" height="3.5" fill="#3c3c3c"/></svg>
<svg style="left:1128px;top:585px" width="24" height="75" viewBox="1128 585 24 75">
<rect x="1132.5" y="589.5" width="13" height="13" fill="none" stroke="#d2d2d2" stroke-width="1" stroke-dasharray="1.5 1.2"/>
<g fill="#d2d2d2"><rect x="1131.5" y="588.5" width="2.5" height="2.5"/><rect x="1144" y="588.5" width="2.5" height="2.5"/><rect x="1131.5" y="601" width="2.5" height="2.5"/><rect x="1144" y="601" width="2.5" height="2.5"/><rect x="1138.3" y="595.3" width="1.6" height="1.6"/>
<rect x="1131.3" y="613.5" width="1.3" height="17"/><rect x="1134.5" y="616.5" width="7" height="5"/><rect x="1134.5" y="623.5" width="11.5" height="5"/></g>
<rect x="1131.5" y="641" width="8.5" height="8.5" fill="none" stroke="#d2d2d2" stroke-width="1.1"/>
<rect x="1136.5" y="646" width="9.5" height="10" fill="#d2d2d2"/>
<rect x="1134.5" y="644" width="5" height="5" fill="#8a8a8a"/>
</svg>
<div class="a" style="left:1137px;top:485px;width:36px;height:103px;background:#535353;border:1px solid #3b3b3b;border-radius:3px 3px 1px 1px;overflow:hidden"><div class="a" style="left:0;top:0;width:100%;height:11.5px;background:#444444;border-bottom:1px solid #3b3b3b"></div></div><svg style="left:1144px;top:488px" width="26" height="9" viewBox="0 0 26 9"><path d="M1.5 1.8 L4.6 4.4 L1.5 7 Z M5.5 1.8 L8.6 4.4 L5.5 7 Z" fill="#dadada"/><path d="M18.8 1.6 L23.8 6.8 M23.8 1.6 L18.8 6.8" stroke="#d4d4d4" stroke-width="1.7"/></svg><svg style="left:1145.5px;top:501.0px" width="20" height="4" viewBox="0 0 20 4"><rect x="0" y="0" width="1" height="3.5" fill="#3c3c3c"/><rect x="2" y="0" width="1" height="3.5" fill="#3c3c3c"/><rect x="4" y="0" width="1" height="3.5" fill="#3c3c3c"/><rect x="6" y="0" width="1" height="3.5" fill="#3c3c3c"/><rect x="8" y="0" width="1" height="3.5" fill="#3c3c3c"/><rect x="10" y="0" width="1" height="3.5" fill="#3c3c3c"/><rect x="12" y="0" width="1" height="3.5" fill="#3c3c3c"/><rect x="14" y="0" width="1" height="3.5" fill="#3c3c3c"/><rect x="16" y="0" width="1" height="3.5" fill="#3c3c3c"/><rect x="18" y="0" width="1" height="3.5" fill="#3c3c3c"/></svg>
<svg style="left:1144px;top:510px" width="24" height="75" viewBox="1144 510 24 75">
<rect x="1148.2" y="515.5" width="14.5" height="10" fill="#9a9a9a" stroke="#d2d2d2" stroke-width="1"/>
<g fill="#6a6a6a"><rect x="1149" y="516.3" width="4" height="4"/><rect x="1158" y="516.3" width="4" height="4"/><rect x="1149" y="521" width="4" height="4"/><rect x="1153.5" y="521" width="4" height="4"/></g>
<path d="M1148.7 515.7 H1162.5 M1148.7 520.5 H1162.5 M1153.2 515.7 V525.3 M1157.7 515.7 V525.3" stroke="#d2d2d2" stroke-width="0.7"/>
<path d="M1151.8 545.5 H1160.3 V554.8 H1151.8 Z" fill="#d2d2d2"/>
<path d="M1153.5 545 L1151 540 C1150 538 1151.5 537.5 1152.5 539 L1155 545 M1155.5 545 V538 M1157 545 L1159.5 540" fill="none" stroke="#d2d2d2" stroke-width="1.2"/>
<circle cx="1155.5" cy="537.5" r="1.5" fill="#d2d2d2"/>
<path d="M1158 540.5 C1159 538 1163 538 1163 540 C1161.5 540.8 1160 541 1158 540.5 Z" fill="#d2d2d2"/>
<circle cx="1155.8" cy="568.8" r="3.6" fill="#d2d2d2"/><circle cx="1151.8" cy="574.5" r="3.6" fill="#d2d2d2"/><circle cx="1159.8" cy="574.5" r="3.6" fill="#d2d2d2"/>
<path d="M1155.8 572 L1157.3 579 H1159.5 V580.5 H1152 V579 H1154.3 Z" fill="#d2d2d2"/>
</svg>
<span class="t" style="left:44px;top:7.39px;font-size:11.5px;font-weight:normal;font-style:normal;color:#e6e6e6;transform:scaleX(1.0167);">Archivo</span>
<span class="t" style="left:98px;top:7.39px;font-size:11.5px;font-weight:normal;font-style:normal;color:#e6e6e6;transform:scaleX(0.9809);">Edición</span>
<span class="t" style="left:151px;top:7.39px;font-size:11.5px;font-weight:normal;font-style:normal;color:#e6e6e6;">Objeto</span>
<span class="t" style="left:202px;top:7.39px;font-size:11.5px;font-weight:normal;font-style:normal;color:#e6e6e6;transform:scaleX(0.9818);">Texto</span>
<span class="t" style="left:246px;top:7.39px;font-size:11.5px;font-weight:normal;font-style:normal;color:#e6e6e6;transform:scaleX(0.9319);">Seleccionar</span>
<span class="t" style="left:319px;top:7.39px;font-size:11.5px;font-weight:normal;font-style:normal;color:#e6e6e6;transform:scaleX(0.9506);">Efecto</span>
<span class="t" style="left:365.5px;top:7.39px;font-size:11.5px;font-weight:normal;font-style:normal;color:#e6e6e6;transform:scaleX(0.9557);">Ver</span>
<span class="t" style="left:398px;top:7.39px;font-size:11.5px;font-weight:normal;font-style:normal;color:#e6e6e6;transform:scaleX(0.9711);">Ventana</span>
<span class="t" style="left:455.6px;top:7.39px;font-size:11.5px;font-weight:normal;font-style:normal;color:#e6e6e6;transform:scaleX(0.9875);">Ayuda</span>
<span class="t" style="left:880px;top:7.04px;font-size:11px;font-weight:normal;font-style:normal;color:#e4e4e4;transform:scaleX(0.9673);">Aspectos esenciales</span>
<span class="t" style="left:1038.5px;top:8.75px;font-size:10px;font-weight:normal;font-style:normal;color:#8c8c8c;transform:scaleX(0.9907);">Buscar en Adobe Stock</span>
<span class="t" style="left:14px;top:38.66px;font-size:9px;font-weight:bold;font-style:normal;color:#c8c8c8;transform:scaleX(0.9520);">No hay selección</span>
<span class="t" style="left:223px;top:40.66px;font-size:9px;font-weight:bold;font-style:normal;color:#dcdcdc;transform:scaleX(0.9428);">Trazo:</span>
<span class="t" style="left:465px;top:40.66px;font-size:9px;font-weight:bold;font-style:normal;color:#202020;transform:scaleX(1.0086);">Redondo 5 ...</span>
<span class="t" style="left:547px;top:40.66px;font-size:9px;font-weight:bold;font-style:normal;color:#dcdcdc;transform:scaleX(0.9542);">Opacidad:</span>
<span class="t" style="left:599px;top:40.16px;font-size:9px;font-weight:normal;font-style:normal;color:#e8e8e8;transform:scaleX(0.9118);">100%</span>
<span class="t" style="left:665px;top:40.66px;font-size:9px;font-weight:normal;font-style:normal;color:#c4c4c4;transform:scaleX(1.0198);">Estilo:</span>
<span class="t" style="left:751.6px;top:40.66px;font-size:9px;font-weight:bold;font-style:normal;color:#e0e0e0;transform:scaleX(0.9632);">Ajustar documento</span>
<span class="t" style="left:853px;top:40.66px;font-size:9px;font-weight:bold;font-style:normal;color:#e0e0e0;transform:scaleX(0.9436);">Preferencias</span>
<span class="t" style="left:77.8px;top:68.60px;font-size:10.5px;font-weight:bold;font-style:normal;color:#e6e6e6;transform:scaleX(0.9727);">Fusion.ai* al 95% (CMYK/Previsualizar)</span>
<span class="t" style="left:76px;top:670.95px;font-size:10px;font-weight:normal;font-style:normal;color:#e6e6e6;transform:scaleX(0.8493);">95%</span>
<span class="t" style="left:180px;top:670.95px;font-size:10px;font-weight:normal;font-style:normal;color:#e6e6e6;">1</span>
<span class="t" style="left:344.5px;top:670.95px;font-size:10px;font-weight:normal;font-style:normal;color:#cfcfcf;transform:scaleX(0.8879);">Selección</span>
<span class="t" style="left:1080.3px;top:422.66px;font-size:9px;font-weight:bold;font-style:normal;color:#f2f2f2;transform:scaleX(1.0066);">Calco de imagen</span>
<span class="t" style="left:1155.2px;top:591.46px;font-size:9px;font-weight:bold;font-style:normal;color:#f0f0f0;transform:scaleX(1.0165);">Transformar</span>
<span class="t" style="left:1155.2px;top:617.65px;font-size:9px;font-weight:bold;font-style:normal;color:#f0f0f0;transform:scaleX(1.0257);">Alinear</span>
<span class="t" style="left:1155.2px;top:642.86px;font-size:9px;font-weight:bold;font-style:normal;color:#f0f0f0;transform:scaleX(0.9602);">Buscatrazos</span>
<span class="t" style="left:855.8px;top:568.63px;font-size:14px;font-weight:bold;font-style:italic;color:#ffffff;transform:scaleX(1.0454);">Kadoshmerah</span>

</body></html>
